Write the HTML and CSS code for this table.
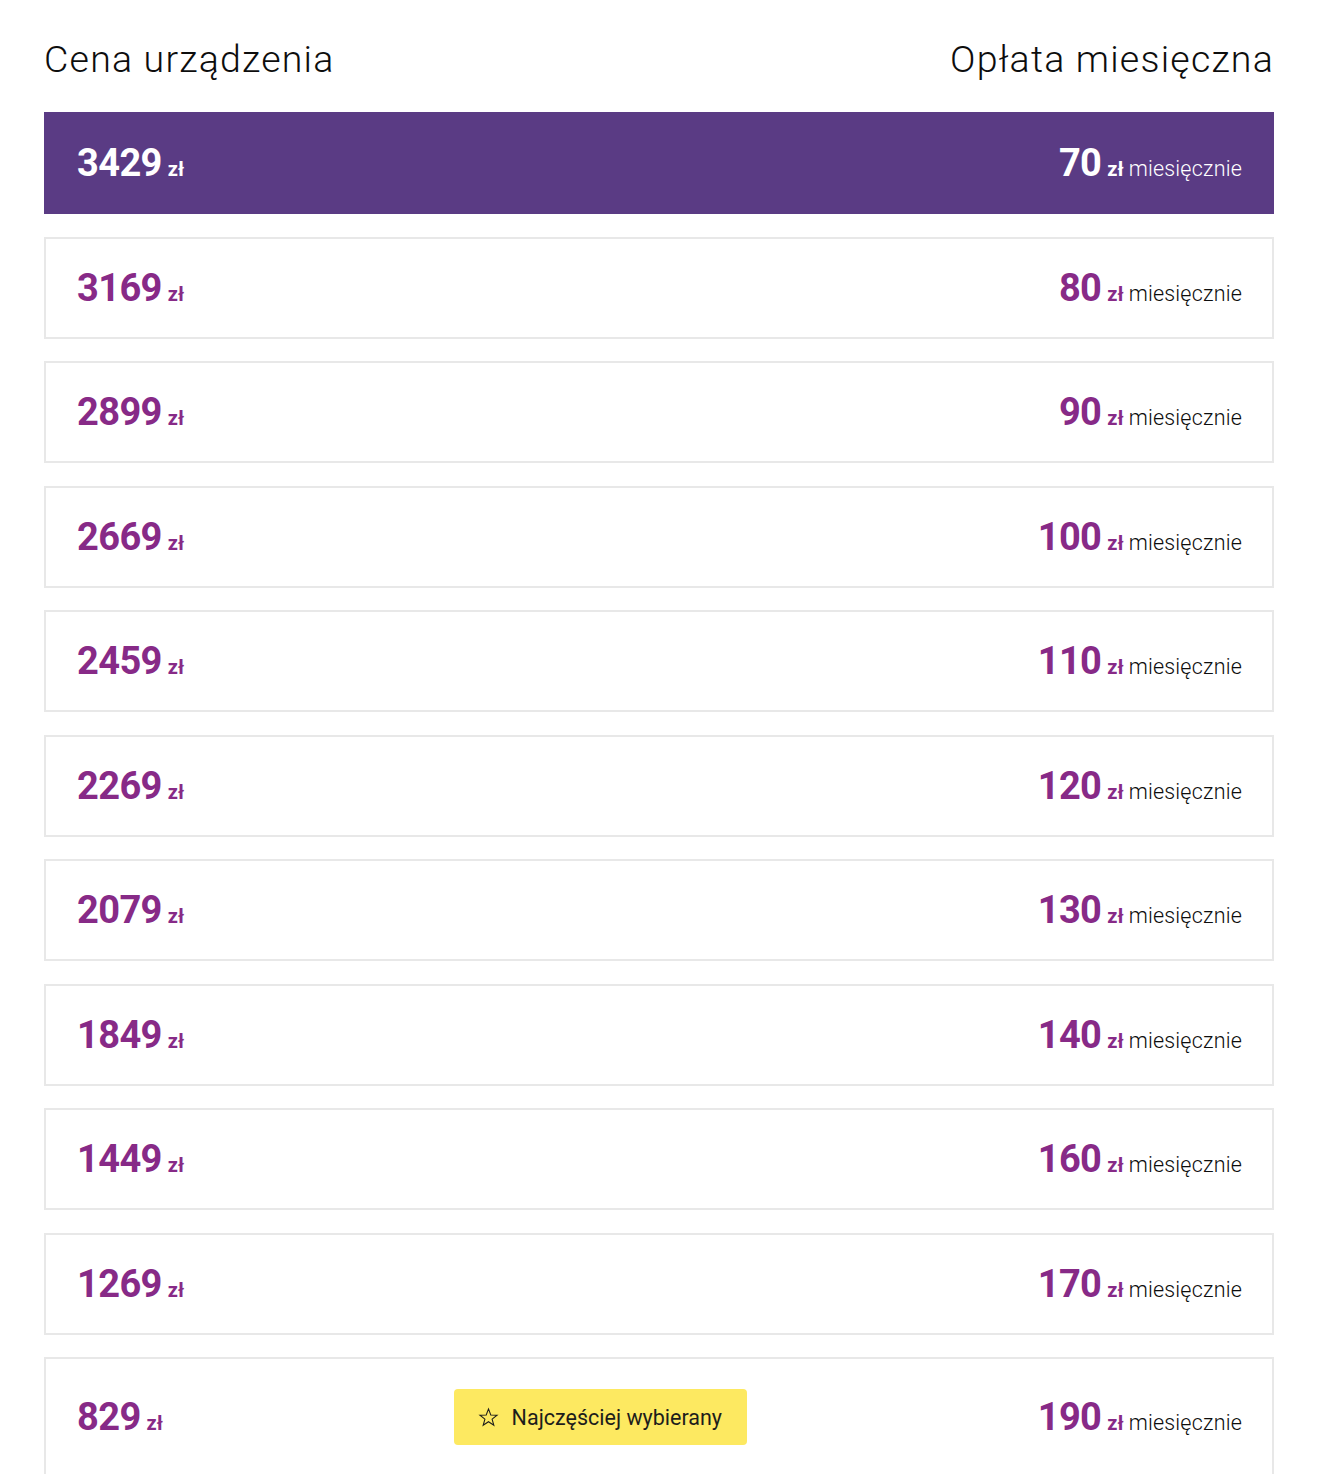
FILE: index.html
```html
<!DOCTYPE html>
<html lang="pl">
<head>
<meta charset="utf-8">
<title>Cena urządzenia</title>
<link rel="stylesheet" href="styles.css">
</head>
<body>
<main class="plans">
  <div class="plans-head">
    <h2 class="plans-title">Cena urządzenia</h2>
    <h2 class="plans-title">Opłata miesięczna</h2>
  </div>
  <ul class="plan-list">
    <li class="plan plan--active">
      <span class="price"><b class="amount">3429</b> <span class="cur">zł</span></span>
      <span class="price"><b class="amount">70</b> <span class="cur">zł</span> <span class="per">miesięcznie</span></span>
    </li>
    <li class="plan">
      <span class="price"><b class="amount">3169</b> <span class="cur">zł</span></span>
      <span class="price"><b class="amount">80</b> <span class="cur">zł</span> <span class="per">miesięcznie</span></span>
    </li>
    <li class="plan">
      <span class="price"><b class="amount">2899</b> <span class="cur">zł</span></span>
      <span class="price"><b class="amount">90</b> <span class="cur">zł</span> <span class="per">miesięcznie</span></span>
    </li>
    <li class="plan">
      <span class="price"><b class="amount">2669</b> <span class="cur">zł</span></span>
      <span class="price"><b class="amount">100</b> <span class="cur">zł</span> <span class="per">miesięcznie</span></span>
    </li>
    <li class="plan">
      <span class="price"><b class="amount">2459</b> <span class="cur">zł</span></span>
      <span class="price"><b class="amount">110</b> <span class="cur">zł</span> <span class="per">miesięcznie</span></span>
    </li>
    <li class="plan">
      <span class="price"><b class="amount">2269</b> <span class="cur">zł</span></span>
      <span class="price"><b class="amount">120</b> <span class="cur">zł</span> <span class="per">miesięcznie</span></span>
    </li>
    <li class="plan">
      <span class="price"><b class="amount">2079</b> <span class="cur">zł</span></span>
      <span class="price"><b class="amount">130</b> <span class="cur">zł</span> <span class="per">miesięcznie</span></span>
    </li>
    <li class="plan">
      <span class="price"><b class="amount">1849</b> <span class="cur">zł</span></span>
      <span class="price"><b class="amount">140</b> <span class="cur">zł</span> <span class="per">miesięcznie</span></span>
    </li>
    <li class="plan">
      <span class="price"><b class="amount">1449</b> <span class="cur">zł</span></span>
      <span class="price"><b class="amount">160</b> <span class="cur">zł</span> <span class="per">miesięcznie</span></span>
    </li>
    <li class="plan">
      <span class="price"><b class="amount">1269</b> <span class="cur">zł</span></span>
      <span class="price"><b class="amount">170</b> <span class="cur">zł</span> <span class="per">miesięcznie</span></span>
    </li>
    <li class="plan plan--tall">
      <span class="price"><b class="amount">829</b> <span class="cur">zł</span></span>
      <span class="badge">
        <svg class="badge-star" width="21" height="21" viewBox="0 0 24 24" aria-hidden="true"><path d="M12 2.2 L14.6 9.1 L21.8 9.3 L16.1 13.8 L18.1 20.9 L12 16.8 L5.9 20.9 L7.9 13.8 L2.2 9.3 L9.4 9.1 Z" fill="none" stroke="#1d1d1b" stroke-width="1.2" stroke-linejoin="miter"/></svg>
        <span class="badge-text">Najczęściej wybierany</span>
      </span>
      <span class="price"><b class="amount">190</b> <span class="cur">zł</span> <span class="per">miesięcznie</span></span>
    </li>
  </ul>
</main>
</body>
</html>
```
FILE: styles.css
```css
html, body {
  margin: 0;
  padding: 0;
  background: #ffffff;
}

body {
  font-family: Roboto, "Liberation Sans", Arial, sans-serif;
  color: #1d1d1b;
}

.plans {
  padding: 38px 44px 0;
}

.plans-head {
  display: flex;
  justify-content: space-between;
  align-items: baseline;
  margin-bottom: 31px;
}

.plans-title {
  margin: 0;
  font-size: 37.5px;
  font-weight: 300;
  letter-spacing: 1.2px;
  line-height: 43px;
  color: #0d0d0d;
}

.plan-list {
  list-style: none;
  margin: 0;
  padding: 0;
  display: flex;
  flex-direction: column;
  gap: 22.5px;
}

.plan {
  box-sizing: border-box;
  height: 102px;
  display: flex;
  justify-content: space-between;
  align-items: center;
  padding: 0 30px 0 31px;
  border: 2px solid #e8e8e8;
  background: #fff;
}

.plan--active {
  background: #5a3b84;
  border-color: #5a3b84;
}

.plan--tall {
  height: 120px;
}

.price {
  white-space: nowrap;
  color: #872a87;
  display: inline-flex;
  align-items: baseline;
  gap: 6px;
}

.amount {
  font-size: 38px;
  font-weight: 700;
  letter-spacing: -0.6px;
}

.cur {
  font-size: 20px;
  font-weight: 700;
}

.per {
  font-size: 21.5px;
  font-weight: 300;
  letter-spacing: 0.2px;
  color: #0d0d0d;
  margin-left: -1px;
}

.plan--active .price,
.plan--active .per {
  color: #ffffff;
}

.badge {
  box-sizing: border-box;
  display: inline-flex;
  align-items: center;
  gap: 13px;
  height: 56px;
  padding: 0 25px 0 24px;
  background: #fde961;
  border-radius: 4px;
  color: #1d1d1b;
}

.badge-text {
  font-size: 21.5px;
  font-weight: 400;
}

.badge-star {
  display: block;
  flex: none;
}
```
